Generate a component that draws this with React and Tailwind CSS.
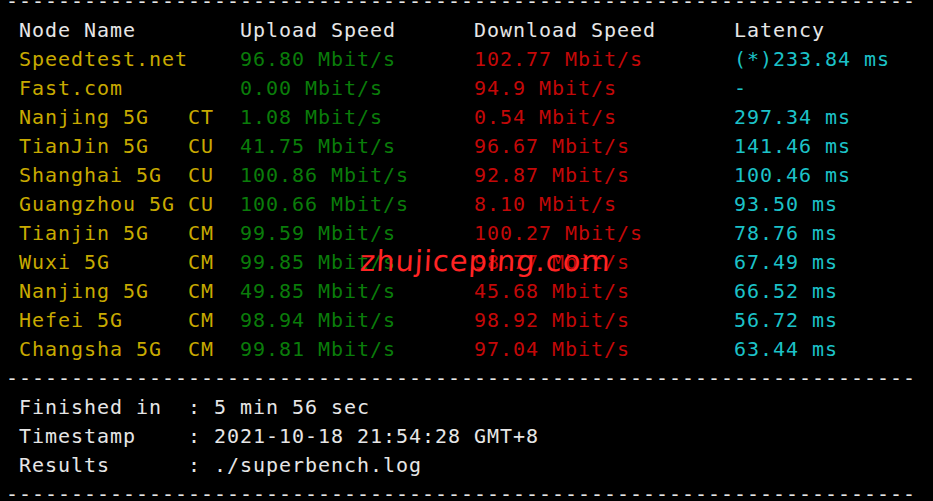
// App.jsx
import React from 'react';

const rows = [
  ['Speedtest.net', '', '96.80 Mbit/s', '102.77 Mbit/s', '(*)233.84 ms'],
  ['Fast.com', '', '0.00 Mbit/s', '94.9 Mbit/s', '-'],
  ['Nanjing 5G', 'CT', '1.08 Mbit/s', '0.54 Mbit/s', '297.34 ms'],
  ['TianJin 5G', 'CU', '41.75 Mbit/s', '96.67 Mbit/s', '141.46 ms'],
  ['Shanghai 5G', 'CU', '100.86 Mbit/s', '92.87 Mbit/s', '100.46 ms'],
  ['Guangzhou 5G', 'CU', '100.66 Mbit/s', '8.10 Mbit/s', '93.50 ms'],
  ['Tianjin 5G', 'CM', '99.59 Mbit/s', '100.27 Mbit/s', '78.76 ms'],
  ['Wuxi 5G', 'CM', '99.85 Mbit/s', '98.77 Mbit/s', '67.49 ms'],
  ['Nanjing 5G', 'CM', '49.85 Mbit/s', '45.68 Mbit/s', '66.52 ms'],
  ['Hefei 5G', 'CM', '98.94 Mbit/s', '98.92 Mbit/s', '56.72 ms'],
  ['Changsha 5G', 'CM', '99.81 Mbit/s', '97.04 Mbit/s', '63.44 ms'],
];

const footer = [
  ['Finished in', '5 min 56 sec'],
  ['Timestamp', '2021-10-18 21:54:28 GMT+8'],
  ['Results', './superbench.log'],
];

const dashes = '-'.repeat(70);

const Line = ({ children, className = '' }) => (
  <div className={`h-[29px] leading-[29px] whitespace-pre flex ${className}`}>{children}</div>
);

const App = () => {
  return (
    <div
      className="relative w-[933px] h-[501px] bg-black overflow-hidden text-[20px] tracking-[0.96px] text-[#e6e6e6]"
      style={{ fontFamily: '"DejaVu Sans Mono", "Liberation Mono", monospace' }}
    >
      <div className="flex flex-col pl-[6px]">
        <Line className="-mt-[13px]">{dashes}</Line>
        <Line>
          <span className="w-[234px]"> Node Name</span>
          <span className="w-[234px]">Upload Speed</span>
          <span className="w-[260px]">Download Speed</span>
          <span>Latency</span>
        </Line>
        {rows.map(([name, isp, up, down, lat], i) => (
          <Line key={i}>
            <span className="w-[234px] text-[#c8aa00]">{' ' + name.padEnd(13, ' ') + isp}</span>
            <span className="w-[234px] text-[#0a7c0a]">{up}</span>
            <span className="w-[260px] text-[#c40808]">{down}</span>
            <span className="text-[#1cc2c8]">{lat}</span>
          </Line>
        ))}
        <Line>{dashes}</Line>
        {footer.map(([label, value]) => (
          <Line key={label}>{' ' + label.padEnd(13, ' ') + ': ' + value}</Line>
        ))}
        <Line>{dashes}</Line>
      </div>

      {/* watermark */}
      <div
        className="absolute left-[360px] top-[241px] text-[29px] leading-[40px] text-[#ff2424] -skew-x-3"
        style={{ fontFamily: '"DejaVu Sans", sans-serif' }}
      >
        zhujiceping.com
      </div>
    </div>
  );
};

export default App;
